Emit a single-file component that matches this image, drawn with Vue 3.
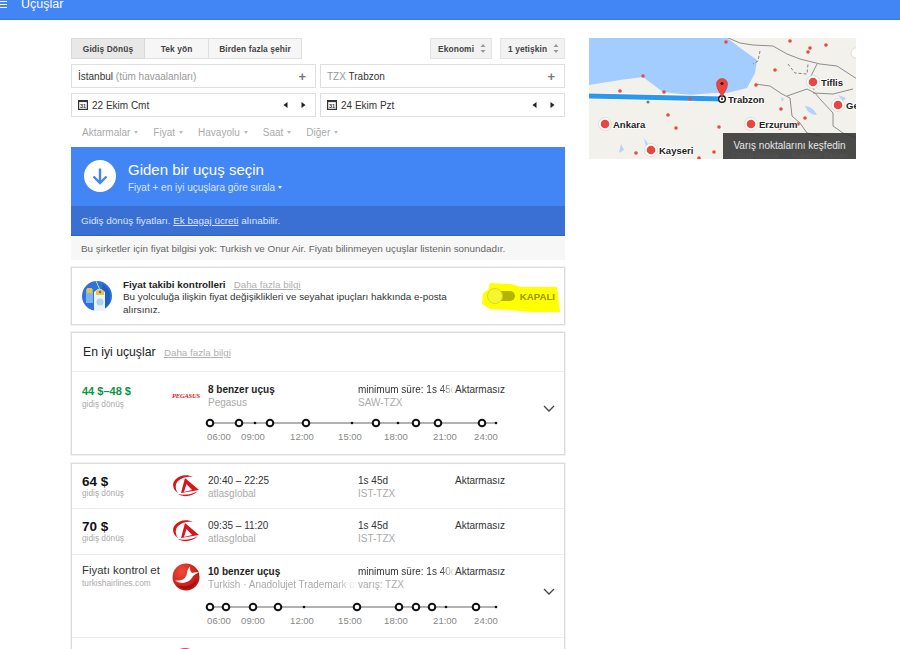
<template>
  <div class="page">
    <header class="topbar">
      <span class="burger"><i></i><i></i><i></i></span>
      <span class="topbar_title">Uçuşlar</span>
    </header>

    <div class="content">
      <main class="main">
        <div class="toolbar">
          <div class="tabs">
            <button v-for="(tab, i) in tabs" :key="tab" class="tab" :class="{ active: i === 0 }">{{ tab }}</button>
          </div>
          <div class="selects">
            <div v-for="s in selects" :key="s" class="select">
              {{ s }}
              <svg width="6" height="9" viewBox="0 0 6 9"><path d="M3 0l2.500 3h-5zM3 9L.5 6h5z" fill="#999" /></svg>
            </div>
          </div>
        </div>

        <div class="fields">
          <div class="field">
            <span><b>İstanbul</b> <em>(tüm havaalanları)</em></span>
            <span class="plus">+</span>
          </div>
          <div class="field">
            <span><em>TZX</em> <b>Trabzon</b></span>
            <span class="plus">+</span>
          </div>
          <div v-for="d in dates" :key="d" class="field">
            <span class="date">
              <svg width="10" height="10" viewBox="0 0 10 10">
                <rect x=".6" y=".6" width="8.800" height="8.800" fill="#fff" stroke="#333" stroke-width="1.200" />
                <rect x=".6" y=".6" width="8.800" height="1.500" fill="#333" />
                <text x="5" y="8" text-anchor="middle" class="cal_num">31</text>
              </svg>
              <b>{{ d }}</b>
            </span>
            <span class="steppers">
              <svg width="5" height="6" viewBox="0 0 5 6"><path d="M4.500 0v6L.5 3z" fill="#222" /></svg>
              <svg width="5" height="6" viewBox="0 0 5 6"><path d="M.5 0v6l4-3z" fill="#222" /></svg>
            </span>
          </div>
        </div>

        <div class="filters">
          <span v-for="f in filters" :key="f" class="filter">{{ f }}<i></i></span>
        </div>

        <section class="pick">
          <div class="pick_head">
            <div class="pick_icon">
              <svg width="20" height="20" viewBox="0 0 20 20"><path d="M10 2.500v14M3.500 10.500l6.500 6.500 6.500-6.500" fill="none" stroke="#4285f4" stroke-width="2.400" /></svg>
            </div>
            <div>
              <div class="pick_title">Giden bir uçuş seçin</div>
              <div class="pick_sub">Fiyat + en iyi uçuşlara göre sırala <i></i></div>
            </div>
          </div>
          <div class="pick_note">Gidiş dönüş fiyatları. <u>Ek bagaj ücreti</u> alınabilir.</div>
        </section>
        <div class="notice">Bu şirketler için fiyat bilgisi yok: Turkish ve Onur Air. Fiyatı bilinmeyen uçuşlar listenin sonundadır.</div>

        <section class="card tracker">
          <svg class="tracker_icon" width="30" height="30" viewBox="0 0 30 30">
            <circle cx="15" cy="15" r="15" fill="#2f73d8" />
            <path d="M21 3a15 15 0 0 1 3 23.500L15 30z" fill="#1e5fc4" />
            <path d="M4 8h7v14H4z" fill="#7fb2ee" />
            <path d="M5 7h5v5H5z" fill="#f2c230" />
            <path d="M12 11l4-3h3l4 3v19H12z" fill="#e8f3fb" />
            <path d="M14 10l3-2h2l3 2v4H14z" fill="#f4c22e" />
            <circle cx="18" cy="11" r="1.200" fill="#2f73d8" />
            <path d="M14 0l4 9" stroke="#b9d6f4" stroke-width="1" />
            <circle cx="18" cy="21" r="3.500" fill="#a9d4f2" />
          </svg>
          <div class="tracker_text">
            <div><b>Fiyat takibi kontrolleri</b><a>Daha fazla bilgi</a></div>
            <p>Bu yolculuğa ilişkin fiyat değişiklikleri ve seyahat ipuçları hakkında e-posta alırsınız.</p>
          </div>
          <div class="toggle">
            <svg class="highlight" width="80" height="32" viewBox="0 0 80 32"><path d="M9 1l21 1 10 3 36 0 3 25-29 0-22-2-19-1-8-5 1-11 5-3z" fill="#ffff00" /></svg>
            <span class="toggle_track"><i></i></span>
            <span class="toggle_label">KAPALI</span>
          </div>
        </section>

        <section class="card best">
          <div class="best_head">En iyi uçuşlar <a>Daha fazla bilgi</a></div>
          <div class="flight tall">
            <div class="flight_top">
              <div class="price">
                <strong class="green">44 $–48 $</strong>
                <small>gidiş dönüş</small>
              </div>
              <div class="logo"><span class="pegasus">PEGASUS</span></div>
              <div class="info">
                <b class="strong">8 benzer uçuş</b>
                <span class="muted">Pegasus</span>
              </div>
              <div class="info">
                <span class="fade">minimum süre: 1s 45d</span>
                <span class="muted">SAW-TZX</span>
              </div>
              <div class="stops">Aktarmasız</div>
            </div>
            <svg class="timeline" width="300" height="30" viewBox="0 0 300 30">
              <line x1="10" y1="6" x2="296" y2="6" stroke="#666" stroke-width="1.200" />
              <circle v-for="x in timeline1.small" :key="x" :cx="x" cy="6" r="1.300" fill="#111" />
              <circle v-for="x in timeline1.big" :key="x" :cx="x" cy="6" r="3.300" fill="#fff" stroke="#111" stroke-width="2" />
              <text v-for="h in hours" :key="h.t" :x="h.x" y="23" text-anchor="middle" class="hour">{{ h.t }}</text>
            </svg>
            <svg class="chevron" width="12" height="7" viewBox="0 0 12 7"><path d="M1 1l5 5 5-5" fill="none" stroke="#444" stroke-width="1.300" /></svg>
          </div>
        </section>

        <section class="card list">
          <div v-for="f in flights" :key="f.time" class="flight">
            <div class="flight_top">
              <div class="price">
                <strong>{{ f.price }}</strong>
                <small>gidiş dönüş</small>
              </div>
              <div class="logo">
                <svg width="28" height="24" viewBox="0 0 28 24">
                  <path d="M21 3C15 0 7 1 3 6-.5 10 1 16 6 19 3 15 3 10 6 7 10 3 16 2 21 3z" fill="#d9141c" />
                  <path d="M13 4L27 16 9 19z" fill="#d9141c" />
                  <path d="M14.500 10L20 16l-8 2z" fill="#fff" />
                  <path d="M6 20c6 4 15 2 20-3-5 3-13 5-20 3z" fill="#d9141c" />
                </svg>
              </div>
              <div class="info">
                <span>{{ f.time }}</span>
                <span class="muted">atlasglobal</span>
              </div>
              <div class="info">
                <span>1s 45d</span>
                <span class="muted">IST-TZX</span>
              </div>
              <div class="stops">Aktarmasız</div>
            </div>
          </div>

          <div class="flight tall third">
            <div class="flight_top">
              <div class="price">
                <span class="check">Fiyatı kontrol et</span>
                <small>turkishairlines.com</small>
              </div>
              <div class="logo">
                <svg width="28" height="28" viewBox="0 0 28 28">
                  <defs>
                    <radialGradient id="thy_red" cx="35%" cy="30%" r="75%">
                      <stop offset="0" stop-color="#f04a3a" />
                      <stop offset="1" stop-color="#b8130f" />
                    </radialGradient>
                  </defs>
                  <circle cx="14" cy="14" r="13.500" fill="url(#thy_red)" />
                  <path d="M3 17.500C9 18 14 16.500 15 10c.4-3 1.500-5 3-6.500-.6 3 .5 5 2 6.500 2-.7 4-1 6.500-.5-2 1.300-4 2.500-5.500 3.500C18.500 19 10 22.500 3 17.500z" fill="#fff" />
                  <path d="M5 22c7 3 15 1 20-6-1 6-6 10-11 10-4 0-7-1.500-9-4z" fill="#a50f0c" />
                </svg>
              </div>
              <div class="info">
                <b class="strong">10 benzer uçuş</b>
                <span class="muted fade">Turkish · Anadolujet Trademark of</span>
              </div>
              <div class="info">
                <span class="fade">minimum süre: 1s 40d</span>
                <span class="muted">varış: TZX</span>
              </div>
              <div class="stops">Aktarmasız</div>
            </div>
            <svg class="timeline" width="300" height="30" viewBox="0 0 300 30">
              <line x1="10" y1="6" x2="296" y2="6" stroke="#666" stroke-width="1.200" />
              <circle v-for="x in timeline2.small" :key="x" :cx="x" cy="6" r="1.300" fill="#111" />
              <circle v-for="x in timeline2.big" :key="x" :cx="x" cy="6" r="3.300" fill="#fff" stroke="#111" stroke-width="2" />
              <text v-for="h in hours" :key="h.t" :x="h.x" y="23" text-anchor="middle" class="hour">{{ h.t }}</text>
            </svg>
            <svg class="chevron" width="12" height="7" viewBox="0 0 12 7"><path d="M1 1l5 5 5-5" fill="none" stroke="#444" stroke-width="1.300" /></svg>
          </div>

          <div class="flight last">
            <div class="flight_top">
              <div class="price"></div>
              <div class="logo"><span class="next_logo"></span></div>
            </div>
          </div>
        </section>
      </main>

      <aside class="map">
        <svg width="267" height="121" viewBox="0 0 267 121">
          <rect width="267" height="121" fill="#f3f1ec" />
          <path d="M0 0H138L154 12 168 22 166 35 158 50 138 55 124 55 101 57 74 54 54 39 31 42 0 47z" fill="#a3ccff" />
          <path d="M216 68c5 0 10 4 12 9-5 0-10-3-12-9zM249 57l8 3-3 3zM192 59l3 2-2 3zM32 106l3 6-5 3zM55 100l5 7-3 2z" fill="#a3ccff" opacity=".8" />
          <path
            d="M137-1L151 5 164 7 184 8 198 16 211 21 231 26 248 28 268 41M166 46L181 48 193 56 201 60 203 78 211 85 218 95 231 98M198 58L218 51 226 55 231 61 244 75 244 88 254 95 268 100M224 55L244 56 264 51M228 26L221 40 225 52"
            fill="none"
            stroke="#8d8d8d"
            stroke-width="1"
          />
          <path d="M171 13L169 23 164 26M199 26L206 35 218 36 219 26" fill="none" stroke="#777" stroke-width=".9" stroke-dasharray="3 2" />
          <line x1="0" y1="58" x2="133" y2="61" stroke="#fff" stroke-width="7" />
          <line x1="0" y1="58" x2="133" y2="61" stroke="#2b98f0" stroke-width="5" />
          <circle v-for="d in map_dots" :key="d[0] + '-' + d[1]" :cx="d[0]" :cy="d[1]" r="1.800" fill="#e74c3c" />
          <circle cx="59" cy="64" r="1.500" fill="#777" />
          <g v-for="c in cities" :key="c.name">
            <circle :cx="c.x" :cy="c.y" r="6.500" fill="#fff" stroke="#ccc" stroke-width=".6" />
            <circle :cx="c.x" :cy="c.y" r="4.300" fill="#e8473f" />
            <text :x="c.x + 8" :y="c.y + 3.500" class="city">{{ c.name }}</text>
          </g>
          <circle cx="267" cy="15" r="5" fill="#fff" stroke="#ccc" stroke-width=".6" />
          <circle cx="133" cy="61" r="3.300" fill="#fff" stroke="#111" stroke-width="1.400" />
          <circle cx="133" cy="61" r="1" fill="#111" />
          <text x="139" y="64.500" class="city">Trabzon</text>
          <path d="M133 60c-1-5-5.500-8-5.500-14a5.500 5.500 0 0 1 11 0c0 6-4.500 9-5.500 14z" fill="#e8473f" stroke="#c62828" stroke-width=".5" />
          <circle cx="133" cy="45.500" r="1.600" fill="#4a1410" />
        </svg>
        <div class="map_cta">Varış noktalarını keşfedin<small>©2016 Google &nbsp; &nbsp; &nbsp;Kullanım Şartları</small></div>
      </aside>
    </div>
  </div>
</template>

<script setup>
const tabs = ['Gidiş Dönüş', 'Tek yön', 'Birden fazla şehir']
const selects = ['Ekonomi', '1 yetişkin']
const dates = ['22 Ekim Cmt', '24 Ekim Pzt']
const filters = ['Aktarmalar', 'Fiyat', 'Havayolu', 'Saat', 'Diğer']

const flights = [
  { price: '64 $', time: '20:40 – 22:25' },
  { price: '70 $', time: '09:35 – 11:20' },
]

// saat etiketleri, timeline svg icindeki x degerleri
const hours = [
  { t: '06:00', x: 19 },
  { t: '09:00', x: 53 },
  { t: '12:00', x: 102 },
  { t: '15:00', x: 150 },
  { t: '18:00', x: 196 },
  { t: '21:00', x: 245 },
  { t: '24:00', x: 286 },
]
const timeline1 = {
  big: [10, 39, 70, 106, 176, 216, 238, 282],
  small: [55, 152, 198, 296],
}
const timeline2 = {
  big: [10, 26, 53, 78, 157, 199, 216, 232, 276],
  small: [104, 246, 296],
}

const map_dots = [
  [137, 4], [201, 3], [237, 7], [221, 10], [219, 14], [186, 32], [54, 38], [31, 53],
  [75, 54], [167, 47], [101, 61], [192, 71], [79, 77], [87, 90], [130, 89], [216, 80],
  [191, 90], [209, 86], [47, 115], [110, 120], [125, 114],
]
const cities = [
  { name: 'Ankara', x: 16, y: 86 },
  { name: 'Kayseri', x: 62, y: 112 },
  { name: 'Erzurum', x: 162, y: 86 },
  { name: 'Tiflis', x: 224, y: 44 },
  { name: 'Gence', x: 249, y: 67 },
]
</script>

<style>
html,
body {
  overflow: hidden;
  background: #fff;
}
</style>

<style scoped>
.page {
  width: 900px;
  height: 649px;
  overflow: hidden;
  background: #fff;
  font-family: 'Liberation Sans', Arial, sans-serif;
  font-size: 10px;
  color: #333;
}

.topbar {
  height: 20px;
  display: flex;
  align-items: flex-start;
  background: #4285f4;
  border-bottom: 1px solid #3b78e7;
  box-sizing: border-box;
  overflow: hidden;
  color: #fff;
}
.burger {
  width: 7px;
  margin: 1px 14px 0 0;
  display: flex;
  flex-direction: column;
  gap: 2px;
}
.burger i {
  display: block;
  height: 1px;
  background: #fff;
}
.topbar_title {
  font-size: 12.500px;
  line-height: 14px;
  margin-top: -3px;
}

.content {
  display: flex;
  align-items: flex-start;
  gap: 24px;
  padding: 18px 0 0 71px;
}
.main {
  width: 494px;
  flex: none;
}

.toolbar {
  display: flex;
  justify-content: space-between;
}
.tabs {
  display: flex;
}
.tab {
  height: 21px;
  padding: 0;
  font: bold 8.400px 'Liberation Sans', Arial, sans-serif;
  letter-spacing: 0.1px;
  color: #444;
  background: #f6f6f6;
  border: 1px solid #e0e0e0;
  border-left: 0;
  width: 64px;
}
.tab:first-child {
  width: 74px;
  border-left: 1px solid #dcdcdc;
  background: #e8e8e8;
  border-color: #d8d8d8;
}
.tab:last-child {
  width: 93px;
}
.selects {
  display: flex;
  gap: 8px;
}
.select {
  width: 62px;
  height: 21px;
  box-sizing: border-box;
  padding: 0 5px 0 7px;
  display: flex;
  align-items: center;
  justify-content: space-between;
  font-weight: bold;
  font-size: 8.400px;
  letter-spacing: 0.1px;
  color: #444;
  background: #f2f2f2;
  border: 1px solid #e4e4e4;
}
.select:last-child {
  width: 65px;
}

.fields {
  display: grid;
  grid-template-columns: 245px 245px;
  gap: 5px 4px;
  margin-top: 5px;
}
.field {
  height: 24px;
  box-sizing: border-box;
  padding: 0 9px 0 6px;
  display: flex;
  align-items: center;
  justify-content: space-between;
  border: 1px solid #dfdfdf;
}
.field b {
  font-weight: normal;
  color: #333;
}
.field em {
  font-style: normal;
  color: #999;
}
.plus {
  font-size: 13px;
  font-weight: bold;
  color: #777;
}
.date {
  display: flex;
  align-items: center;
  gap: 4px;
}
.cal_num {
  font-size: 5.500px;
  font-weight: bold;
  fill: #333;
}
.steppers {
  display: flex;
  gap: 13px;
}

.filters {
  display: flex;
  gap: 15px;
  padding: 9px 0 0 11px;
  height: 21px;
  color: #aaa;
  line-height: 14px;
}
.filter i {
  display: inline-block;
  margin-left: 4px;
  vertical-align: 2px;
  border: 2.500px solid transparent;
  border-top: 3px solid #bbb;
  border-bottom: 0;
}

.pick {
  background: #4285f4;
  color: #fff;
}
.pick_head {
  height: 59px;
  box-sizing: border-box;
  padding: 13px 0 0 13px;
  display: flex;
  gap: 12px;
}
.pick_icon {
  width: 32px;
  height: 32px;
  border-radius: 50%;
  background: #fff;
  display: flex;
  align-items: center;
  justify-content: center;
}
.pick_title {
  font-size: 15px;
  line-height: 19px;
}
.pick_sub {
  margin-top: 2px;
  line-height: 13px;
  color: #dbe7fc;
}
.pick_sub i {
  display: inline-block;
  vertical-align: 2px;
  border: 2.500px solid transparent;
  border-top: 3px solid #e8f0fe;
  border-bottom: 0;
}
.pick_note {
  height: 30px;
  box-sizing: border-box;
  padding-left: 10px;
  line-height: 30px;
  font-size: 9.900px;
  background: #3a6fd4;
  border-bottom: 1px solid #2f62c8;
  color: #dbe7fc;
}
.notice {
  height: 23px;
  padding-left: 10px;
  line-height: 23px;
  margin-top: 1px;
  background: #f7f7f7;
  color: #666;
  font-size: 9.900px;
}

.card {
  border: 1px solid #dcdcdc;
  box-shadow: 0 0 0 1px #f1f1f1;
  background: #fff;
}
.tracker {
  height: 58px;
  box-sizing: border-box;
  margin-top: 7px;
  position: relative;
  display: flex;
  align-items: center;
  padding: 0 9px 0 10px;
  gap: 11px;
}
.tracker_icon {
  flex: none;
}
.tracker_text {
  width: 340px;
  padding-top: 3px;
  line-height: 12.500px;
  font-size: 9.900px;
  color: #333;
}
.tracker_text b {
  color: #222;
}
.tracker_text a,
.best_head a {
  margin-left: 8px;
  color: #b0b0b0;
  text-decoration: underline;
  font-size: 9.800px;
}
.best_head a {
  margin-left: 5px;
}
.tracker_text p {
  margin: 0;
}
.toggle {
  margin-left: auto;
  position: relative;
  display: flex;
  align-items: center;
  gap: 5px;
}
.highlight {
  position: absolute;
  left: -14px;
  top: -9px;
}
.toggle_track {
  position: relative;
  width: 20px;
  height: 10px;
  border-radius: 5px;
  background: #b4b400;
}
.toggle_track i {
  position: absolute;
  left: -8px;
  top: -3px;
  width: 16px;
  height: 16px;
  box-sizing: border-box;
  border-radius: 50%;
  background: #f6f630;
  border: 1px solid #d8d820;
}
.toggle_label {
  position: relative;
  font-size: 9.700px;
  font-weight: bold;
  color: #949400;
}

.best {
  margin-top: 7px;
}
.best_head {
  height: 38px;
  line-height: 38px;
  padding-left: 11px;
  font-size: 12.200px;
  color: #222;
  border-bottom: 1px solid #ececec;
}
.flight {
  position: relative;
  border-bottom: 1px solid #ececec;
  box-sizing: border-box;
  height: 45px;
  padding: 10px 0 0 10px;
}
.flight:nth-child(2) {
  height: 46px;
}
.flight.tall {
  height: 83px;
}
.best .flight.tall {
  height: 82px;
  padding-top: 11px;
  border-bottom: 0;
}
.flight_top {
  display: grid;
  grid-template-columns: 90px 36px 150px 97px auto;
}
.price strong {
  display: block;
  font-size: 13.500px;
  line-height: 15px;
  color: #111;
}
.price .green {
  font-size: 11px;
  line-height: 17px;
  color: #0b9444;
}
.price small {
  display: block;
  font-size: 8.300px;
  line-height: 9px;
  color: #aaa;
}
.check {
  display: block;
  font-size: 11.400px;
  line-height: 13px;
  margin: -1px 0 2px;
  color: #333;
}
.logo {
  display: flex;
  align-items: flex-start;
}
.pegasus {
  margin-top: 9px;
  font: italic bold 6.500px 'Liberation Serif', serif;
  letter-spacing: -0.2px;
  color: #d8121c;
}
.third .logo {
  margin-top: -2px;
}
.info {
  display: flex;
  flex-direction: column;
  line-height: 13px;
  color: #333;
  min-width: 0;
  white-space: nowrap;
}
.info .strong {
  color: #222;
}
.muted {
  color: #aaa;
}
.fade {
  display: block;
  overflow: hidden;
  -webkit-mask-image: linear-gradient(to right, #000 85%, transparent);
  mask-image: linear-gradient(to right, #000 85%, transparent);
}
.stops {
  line-height: 13px;
  color: #333;
}
.timeline {
  display: block;
  position: absolute;
  left: 128px;
  top: 45px;
}
.third .timeline {
  top: 46px;
}
.hour {
  font-size: 9.500px;
  fill: #888;
}
.chevron {
  position: absolute;
  left: 471px;
  top: 33px;
}

.list {
  margin-top: 8px;
}
.third {
  border-bottom: 1px solid #ececec;
}
.last {
  height: 20px;
}
.next_logo {
  display: block;
  width: 26px;
  height: 26px;
  border-radius: 50%;
  background: #e53965;
}

.map {
  position: relative;
  width: 267px;
  height: 121px;
  overflow: hidden;
}
.map svg {
  display: block;
}
.city {
  font-size: 9.500px;
  font-weight: bold;
  fill: #222;
  stroke: #fff;
  stroke-width: 1.500px;
  paint-order: stroke;
}
.map_cta {
  position: absolute;
  right: 0;
  bottom: 0;
  width: 133px;
  height: 26px;
  box-sizing: border-box;
  padding-top: 7px;
  text-align: center;
  font-size: 10px;
  color: #e8e8e8;
  background: rgba(50, 50, 50, 0.88);
}
.map_cta small {
  display: block;
  font-size: 7.500px;
  color: #555;
  white-space: nowrap;
}
</style>
